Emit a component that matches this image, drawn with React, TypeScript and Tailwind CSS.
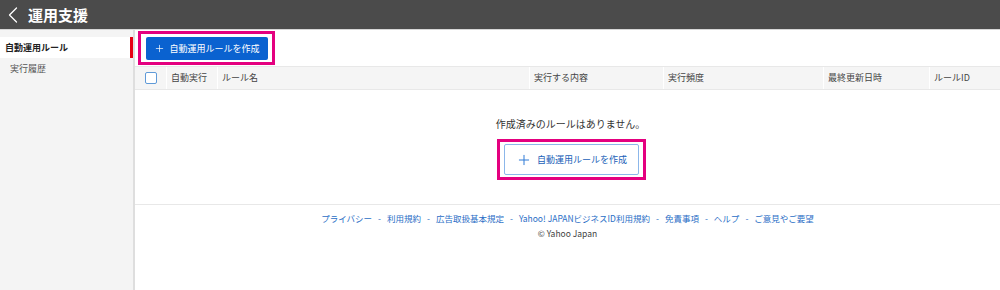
import { Plus, ChevronLeft } from 'lucide-react';

const font = { fontFamily: '"Noto Sans CJK JP", "Noto Sans", sans-serif' };

const columns = [
  { label: '自動実行', w: 'w-[51px]' },
  { label: 'ルール名', w: 'w-[312px]' },
  { label: '実行する内容', w: 'w-[134px]' },
  { label: '実行頻度', w: 'w-[160px]' },
  { label: '最終更新日時', w: 'w-[106px]' },
  { label: 'ルールID', w: 'flex-1' },
];

const footerLinks = [
  'プライバシー',
  '利用規約',
  '広告取扱基本規定',
  'Yahoo! JAPANビジネスID利用規約',
  '免責事項',
  'ヘルプ',
  'ご意見やご要望',
];

export default function App() {
  return (
    <div className="w-[1000px] h-[290px] flex flex-col bg-white overflow-hidden" style={font}>
      {/* ヘッダー */}
      <div className="h-[30px] shrink-0 bg-[#4b4b4b] border-b border-[#d6d6d6] flex items-center gap-[1px]">
        <ChevronLeft size={28} strokeWidth={1.1} className="text-white -ml-[1px]" />
        <span className="text-white font-bold text-[15px] leading-none">運用支援</span>
      </div>

      <div className="flex flex-1 min-h-0">
        {/* サイドバー */}
        <div className="w-[135px] shrink-0 bg-[#f4f4f4] border-r-2 border-[#dedede] pt-[7px]">
          <div className="h-[21px] bg-white flex items-center justify-between pl-[5px]">
            <span className="text-[9px] font-bold text-[#222]">自動運用ルール</span>
            <span className="w-[3px] h-full bg-[#e60012]" />
          </div>
          <div className="h-[22px] flex items-center pl-[10px] text-[9px] text-[#555]">実行履歴</div>
        </div>

        {/* メイン */}
        <div className="flex-1 flex flex-col">
          <div className="pt-[1px] pl-[3px]">
            <div className="inline-flex border-[3px] border-[#e4007f] pl-[5px] pr-[4px] pt-[3px] pb-[2px]">
              <button className="w-[122px] h-[23px] bg-[#0a62d0] rounded-[2px] text-white text-[9px] flex items-center justify-center gap-[4px]">
                <Plus size={11} strokeWidth={1.5} />
                自動運用ルールを作成
              </button>
            </div>
          </div>

          {/* テーブルヘッダー */}
          <div className="mt-[1px] h-[24px] bg-[#f5f5f5] border-y border-[#e8e8e8] flex items-stretch text-[9px] text-[#444]">
            <div className="w-[32px] flex items-center pl-[10px] border-r border-white">
              <span className="w-[12px] h-[12px] rounded-[2px] border-[1.5px] border-[#5f9ad8] bg-white" />
            </div>
            {columns.map((c) => (
              <div key={c.label} className={`${c.w} flex items-center pl-[4px] border-r border-white last:border-r-0`}>
                {c.label}
              </div>
            ))}
          </div>

          {/* 空の状態 */}
          <div className="h-[114px] flex flex-col items-center pt-[29px]">
            <p className="text-[10px] text-[#333] leading-none ml-[6px]">作成済みのルールはありません。</p>
            <div className="mt-[10px] ml-[8px] border-[3px] border-[#e4007f] px-[4px] py-[2px]">
              <button className="w-[135px] h-[31px] border border-[#8cb7ea] rounded-[2px] bg-white text-[#1b5fb8] text-[9px] flex items-center justify-center gap-[5px]">
                <Plus size={16} strokeWidth={1.5} className="text-[#2f7ad6]" />
                自動運用ルールを作成
              </button>
            </div>
          </div>

          {/* フッター */}
          <div className="border-t border-[#e8e8e8] flex flex-col items-center pt-[9px]">
            <div className="flex items-center text-[8.5px] text-[#2a6ec6] leading-none">
              {footerLinks.map((l, i) => (
                <span key={l} className="flex items-center">
                  {i > 0 && <span className="mx-[6px]">-</span>}
                  <span>{l}</span>
                </span>
              ))}
            </div>
            <div className="mt-[6px] text-[8.5px] text-[#444] leading-none">© Yahoo Japan</div>
          </div>
        </div>
      </div>
    </div>
  );
}
